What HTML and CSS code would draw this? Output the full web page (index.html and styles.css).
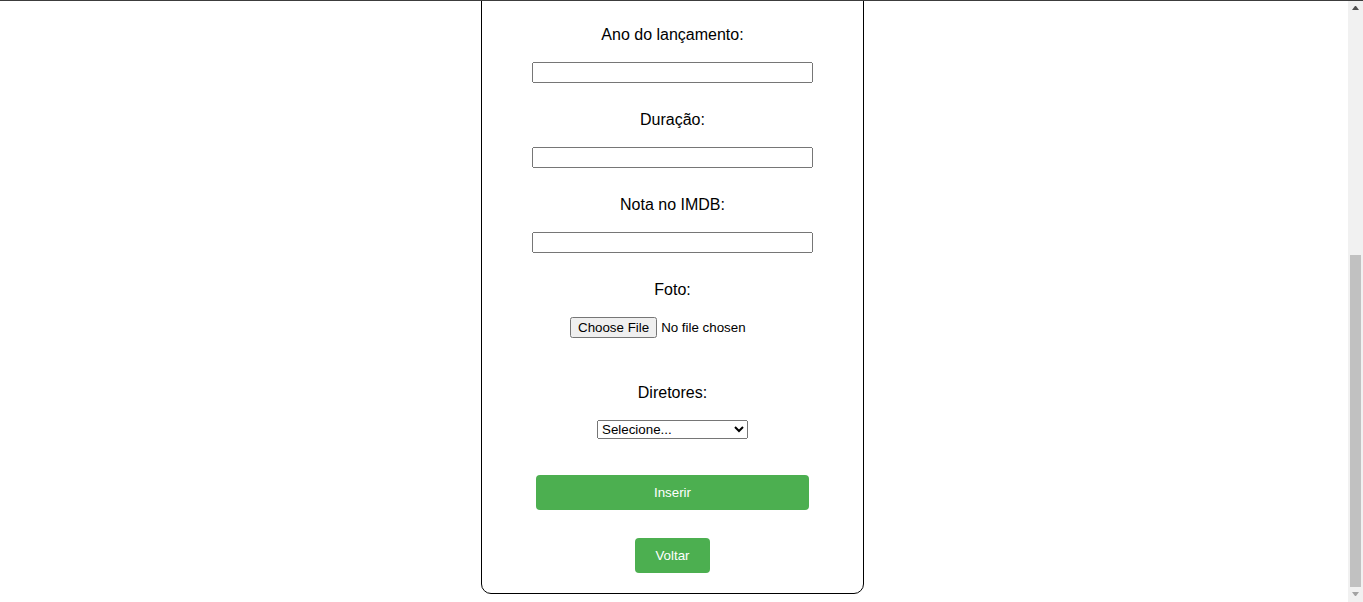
FILE: index.html
```html
<!DOCTYPE html>
<html lang="pt-BR">
<head>
<meta charset="utf-8">
<title>Inserir filme</title>
<link rel="stylesheet" href="styles.css">
</head>
<body>
<div class="topline"></div>
<div class="scrollbar" aria-hidden="true">
  <span class="arrow arrow-up"></span>
  <div class="track"><div class="thumb"></div></div>
  <span class="arrow arrow-down"></span>
</div>
<div class="page">
  <form class="card">
    <h2 class="title">Inserir Filme</h2>
    <div class="field">
      <label class="label">Título:</label>
      <input class="text" type="text">
    </div>
    <div class="field">
      <label class="label">Gênero:</label>
      <input class="text" type="text">
    </div>
    <div class="field">
      <label class="label">Sinopse:</label>
      <input class="text" type="text">
    </div>
    <div class="field">
      <label class="label">Classificação:</label>
      <input class="text" type="text">
    </div>
    <div class="field">
      <label class="label">Ano do lançamento:</label>
      <input class="text" type="text">
    </div>
    <div class="field">
      <label class="label">Duração:</label>
      <input class="text" type="text">
    </div>
    <div class="field">
      <label class="label">Nota no IMDB:</label>
      <input class="text" type="text">
    </div>
    <div class="field field-file">
      <label class="label">Foto:</label>
      <input class="file" type="file">
    </div>
    <div class="field field-select">
      <label class="label">Diretores:</label>
      <select class="select">
        <option>Selecione...</option>
      </select>
    </div>
    <button class="btn btn-wide" type="button">Inserir</button>
    <button class="btn" type="button">Voltar</button>
  </form>
</div>
<script src="script.js"></script>
</body>
</html>
```

FILE: styles.css
```css
html, body {
  background: #fff;
}
body {
  margin: 8px 23px 8px 8px;
  font-family: "Liberation Sans", Arial, sans-serif;
  color: #000;
}
.topline {
  position: fixed;
  top: 0;
  left: 0;
  right: 0;
  height: 1px;
  background: #3c3c3c;
  z-index: 11;
}
.scrollbar {
  position: fixed;
  top: 0;
  right: 0;
  bottom: 0;
  width: 15px;
  background: #f1f1f1;
  display: flex;
  flex-direction: column;
  align-items: center;
  z-index: 10;
}
.arrow {
  display: block;
  width: 1px;
  height: 0;
  border-left: 3px solid transparent;
  border-right: 3px solid transparent;
}
.arrow-up {
  margin: 6px 0 5px;
  border-bottom: 4px solid #505050;
}
.arrow-down {
  margin: 5px 0 6px;
  border-top: 4px solid #a3a3a3;
}
.track {
  flex: 1;
  width: 11px;
  display: flex;
  flex-direction: column;
  justify-content: flex-end;
}
.thumb {
  height: 332px;
  background: #c1c1c1;
}
.page {
  display: flex;
  justify-content: center;
  padding-right: 3px;
}
.card {
  box-sizing: border-box;
  width: 383px;
  border: 1px solid #000;
  border-radius: 10px;
  padding: 20px 0 20px;
  display: flex;
  flex-direction: column;
  align-items: center;
}
.title {
  margin: 0 0 63px;
  font-size: 24px;
  line-height: 28px;
}
.field {
  display: flex;
  flex-direction: column;
  align-items: center;
  margin-bottom: 27px;
}
.field-file {
  margin-bottom: 45px;
}
.field-select {
  margin-bottom: 36px;
}
.label {
  font-size: 16px;
  line-height: 18px;
  margin-top: 1px;
  margin-bottom: 18px;
}
.text {
  box-sizing: border-box;
  width: 281px;
  height: 21px;
  margin: 0;
  font-family: "Liberation Sans", Arial, sans-serif;
  font-size: 13.33px;
}
.file {
  box-sizing: border-box;
  width: 205px;
  margin: 0;
  height: 21px;
  font-family: "Liberation Sans", Arial, sans-serif;
  font-size: 13.33px;
}
.select {
  box-sizing: border-box;
  width: 151px;
  height: 19px;
  margin: 0;
  font-family: "Liberation Sans", Arial, sans-serif;
  font-size: 13.33px;
}
.btn {
  box-sizing: border-box;
  height: 35px;
  padding: 0 20px;
  margin: 0;
  border: none;
  border-radius: 4px;
  background: #4caf50;
  color: #fff;
  font-family: "Liberation Sans", Arial, sans-serif;
  font-size: 13.33px;
  cursor: pointer;
}
.btn-wide {
  width: 273px;
  margin-bottom: 28px;
}
```

FILE: script.js
```js
window.scrollTo(0, document.documentElement.scrollHeight);
window.addEventListener('load', function () {
  window.scrollTo(0, document.documentElement.scrollHeight);
});
```
